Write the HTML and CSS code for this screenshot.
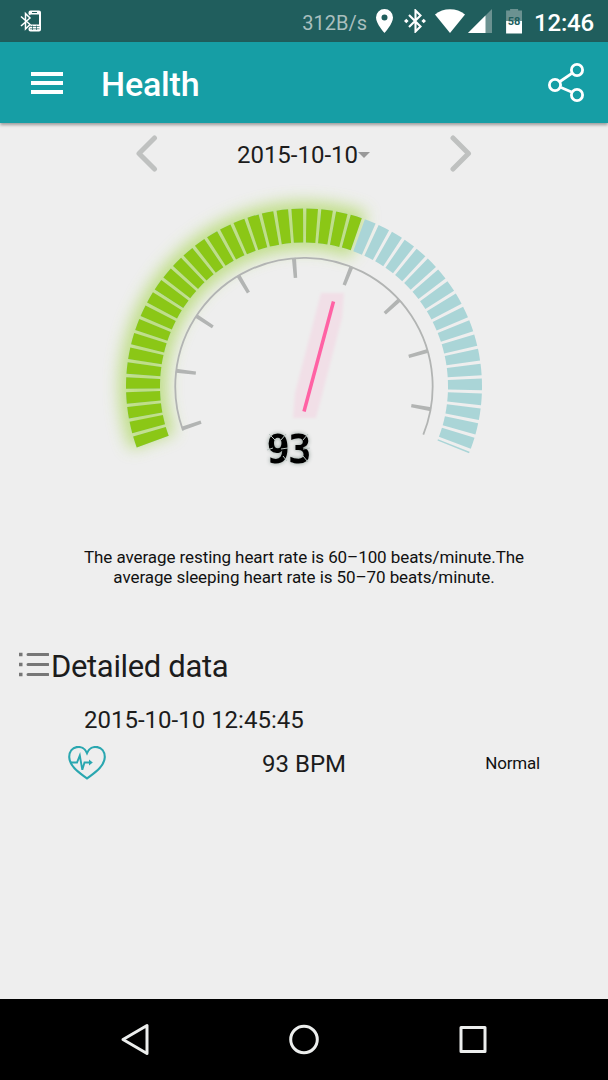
FILE: index.html
```html
<!DOCTYPE html>
<html lang="en">
<head>
<meta charset="utf-8">
<title>Health</title>
<link rel="stylesheet" href="styles.css">
</head>
<body>
<div class="status">
  <svg class="phone" width="22" height="22" viewBox="0 0 22 22">
    <path d="M1 6.500l9 8-4.500 4.500V3.500l4.500 4.500-9 8" fill="none" stroke="#fff" stroke-width="1.500"/>
    <path d="M8.500 4V2.500q0-2 2-2h8.500q2 0 2 2v17q0 2-2 2h-8.500q-2 0-2-2v-1l2-3v-1h8.500V4.500h-8.500l-.5 1z" fill="#fff"/>
    <path d="M12 2.500h5" stroke="#205e5d"/>
    <path d="M10 16.500h9.500M10 18.800h9.500M12.500 15.500v4.500M16.500 15.500v4.500" stroke="#205e5d" stroke-width=".7"/>
  </svg>
  <span class="speed">312B/s</span>
  <svg class="pin" width="17" height="24" viewBox="0 0 17 24">
    <path d="M8.500 0A8.500 8.500 0 0 0 0 8.500C0 14.800 8.500 24 8.500 24S17 14.800 17 8.500A8.500 8.500 0 0 0 8.500 0zm0 11.500a3 3 0 1 1 0-6 3 3 0 0 1 0 6z" fill="#fff"/>
  </svg>
  <svg class="bt" width="22" height="24" viewBox="0 0 22 24">
    <path d="M5 6l11.500 11.500-5 5V1.500l5 5L5 18" fill="none" stroke="#fff" stroke-width="2.100"/>
    <path d="M2.300 9.700l2.300 2.300-2.300 2.300L0 12zM19.700 9.700L22 12l-2.300 2.300-2.300-2.300z" fill="#fff"/>
  </svg>
  <svg class="wifi" width="30" height="24" viewBox="0 0 30 24">
    <path d="M15 24L0 5.500C8-1.600 22-1.600 30 5.500z" fill="#fff"/>
  </svg>
  <svg class="signal" width="24" height="24" viewBox="0 0 24 24">
    <path d="M0 24L24 0v24z" fill="#6b9291"/>
    <path d="M0 24L17.500 6.500V24z" fill="#fff"/>
  </svg>
  <span class="battery">58</span>
  <span class="clock">12:46</span>
</div>

<div class="appbar">
  <div class="menu"><i></i><i></i><i></i></div>
  <h1>Health</h1>
  <svg class="share" width="36" height="40" viewBox="0 0 36 40" fill="none" stroke="#fff">
    <path d="M12 18.500l11.500-7.800M13 24.500l10.500 4.500" stroke-width="2.800"/>
    <g stroke-width="2.800">
      <circle cx="7" cy="22" r="5.600"/>
      <circle cx="29" cy="7" r="5.600"/>
      <circle cx="29" cy="32" r="5.600"/>
    </g>
  </svg>
</div>

<div class="main">
  <div class="datebar">
    <svg width="22" height="37" viewBox="0 0 22 37"><path d="M18.500 3L3 18.500l15.500 15.500"/></svg>
    <span class="date">2015-10-10</span>
    <svg width="22" height="37" viewBox="0 0 22 37"><path d="M3 3l15.500 15.500L3 34"/></svg>
  </div>

  <!-- every arc starts at 160deg and sweeps 222deg, so dashes are given in degrees -->
  <svg class="gauge" width="608" height="296" viewBox="0 184 608 296">
    <defs>
      <filter id="glow" x="-20%" y="-20%" width="140%" height="140%"><feGaussianBlur stdDeviation="8"/></filter>
      <filter id="soft" filterUnits="userSpaceOnUse" x="270" y="270" width="100" height="170"><feGaussianBlur stdDeviation="1.800"/></filter>
    </defs>
    <path class="lit-glow" d="M152.710 441.570A161 161 0 0 1 359.060 235.200" filter="url(#glow)"/>
    <path class="bars" pathLength="222" d="M152.710 441.570A161 161 0 1 1 453.280 446.810"/>
    <path class="bars lit" pathLength="128.950" d="M152.710 441.570A161 161 0 0 1 356.290 234.230"/>
    <path class="dial" d="M183 430.500A128.700 128.700 0 1 1 423.300 434.700"/>
    <path class="ticks" pathLength="222" d="M192.180 427.200A119 119 0 1 1 414.330 431.080"/>
    <path class="needle-glow" d="M321 293h23l-2 25-26 100h-23l2-25z" filter="url(#soft)"/>
    <path class="needle" d="M333.500 301.500L304 411.500"/>
    <text class="value" x="266.500" y="463">93</text>
    <path class="cuts" d="M269 434l6 6M286 434l-5 6M267 450l6-2M281 449l7-1M283 456l4 5M303 440l5-6M303 449l7-1M303 456l5 6"/>
  </svg>

  <p class="note">The average resting heart rate is 60–100 beats/minute.The<br>average sleeping heart rate is 50–70 beats/minute.</p>

  <div class="heading">
    <svg width="30" height="26" viewBox="0 0 30 26">
      <path d="M9 2.500h20M9 12.500h20M9 22.500h20" stroke="#777" stroke-width="3" stroke-linecap="round"/>
      <path d="M0 2.500h3.500M0 12.500h3.500M0 22.500h3.500" stroke="#777" stroke-width="3.300"/>
    </svg>
    <h2>Detailed data</h2>
  </div>

  <div class="time">2015-10-10 12:45:45</div>
  <div class="record">
    <svg width="38" height="34" viewBox="0 0 38 34" fill="none" stroke="#2aa7b0">
      <path d="M19 32.500C14 28.500 1.200 21 1.200 11 1.200-.5 15-2.500 19 7 23-2.500 36.800-.5 36.800 11 36.800 21 24 28.500 19 32.500z" stroke-width="2.100"/>
      <path d="M3 16.500h6l2.800-7 2.500 14.300 2.200-7.300h6" stroke-width="1.900"/>
      <path d="M21 13.500l3.800 3-3.800 3z" fill="#2aa7b0" stroke="none"/>
    </svg>
    <span class="bpm">93 BPM</span>
    <span class="state">Normal</span>
  </div>
</div>

<div class="navbar">
  <svg width="30" height="34" viewBox="0 0 30 34"><path d="M27 2.500v28L3 16.500z"/></svg>
  <svg width="30" height="34" viewBox="0 0 30 34"><circle cx="15" cy="16.500" r="13.300"/></svg>
  <svg width="30" height="34" viewBox="0 0 30 34"><rect x="3" y="4.500" width="24" height="24"/></svg>
</div>
</body>
</html>
```
FILE: styles.css
```css
* {
  box-sizing: border-box;
}
body {
  margin: 0;
  height: 1080px;
  display: flex;
  flex-direction: column;
  overflow: hidden;
  background: #eee;
  color: #1c1c1c;
  font-family: Roboto, "Liberation Sans", sans-serif;
}
svg {
  display: block;
  flex: none;
}
h1, h2, p {
  margin: 0;
}

/* status bar */
.status {
  height: 42px;
  display: flex;
  align-items: center;
  padding: 0 14px 0 20px;
  background: #205e5d;
  color: #fff;
}
.speed {
  margin-left: auto;
  padding-top: 4px;
  color: #a9bfbe;
  font-size: 20px;
}
.pin {
  margin-left: 9px;
}
.bt {
  margin-left: 11px;
}
.wifi {
  margin-left: 9px;
}
.signal {
  margin-left: 3px;
}
.battery {
  width: 16px;
  height: 25px;
  margin-left: 14px;
  background: linear-gradient(#6b9291 12px, #fff 12px);
  clip-path: polygon(0 2px, 4px 2px, 4px 0, 12px 0, 12px 2px, 100% 2px, 100% 100%, 0 100%);
  color: #205e5d;
  font-size: 11px;
  font-weight: bold;
  line-height: 26px;
  text-align: center;
}
.clock {
  margin-left: 12px;
  padding-top: 3px;
  font-size: 24px;
  font-weight: 500;
  letter-spacing: -.2px;
}

/* title bar */
.appbar {
  height: 81px;
  flex: none;
  display: flex;
  align-items: center;
  padding: 0 24px 0 31px;
  background: #169ea5;
  box-shadow: 0 2px 3px rgba(0, 0, 0, .35);
  color: #fff;
}
.menu {
  width: 32px;
  height: 22px;
  display: flex;
  flex-direction: column;
  justify-content: space-between;
}
.menu i {
  height: 4px;
  background: #fff;
}
.appbar h1 {
  margin-left: 38px;
  padding-top: 2px;
  font-size: 34px;
  font-weight: 500;
  letter-spacing: -.2px;
}
.share {
  margin-left: auto;
}

.main {
  flex: 1;
}
.datebar {
  height: 61px;
  display: flex;
  align-items: center;
  justify-content: space-between;
  padding: 0 136px;
}
.datebar path {
  fill: none;
  stroke: #bfc1c0;
  stroke-width: 5;
  stroke-linecap: round;
  stroke-linejoin: round;
}
.date {
  display: flex;
  align-items: center;
  margin-left: -1px;
  padding-top: 2px;
  font-size: 24px;
}
.date::after {
  content: "";
  border: 6px solid transparent;
  border-top-color: #999;
  border-bottom: 0;
}

/* gauge */
.gauge path {
  fill: none;
}
.gauge .bars {
  stroke: #aad5d7;
  stroke-width: 34;
  stroke-dasharray: 3.75 1.065;
}
.gauge .lit {
  stroke: #8bc716;
}
.gauge .lit-glow {
  stroke: #a4d54a;
  stroke-width: 48;
  opacity: .62;
}
.gauge .dial {
  stroke: #b2b4b3;
  stroke-width: 1.8;
}
.gauge .ticks {
  stroke: #b2b4b3;
  stroke-width: 20;
  stroke-dasharray: 1.8 24.35;
}
.gauge .needle {
  stroke: #ff62a4;
  stroke-width: 3.5;
}
.gauge .needle-glow {
  fill: #f1dfe7;
}
.gauge .value {
  fill: #000;
  font: bold 39px "DejaVu Sans Mono", monospace;
  letter-spacing: -2px;
  filter: drop-shadow(0 0 2px #8a9a94);
}
.gauge .cuts {
  stroke: #b9c4c0;
  stroke-width: 1;
}

.note {
  padding-top: 67px;
  color: #111;
  font-size: 17px;
  letter-spacing: -.08px;
  line-height: 20px;
  text-align: center;
}

/* details */
.heading {
  display: flex;
  align-items: center;
  gap: 2px;
  margin-top: 58px;
  padding-left: 19px;
}
.heading h2 {
  padding-top: 4px;
  font-size: 31px;
  font-weight: normal;
  letter-spacing: -.35px;
  line-height: 36px;
}
.time {
  margin-top: 18px;
  padding-left: 84px;
  font-size: 24px;
  line-height: 34px;
}
.record {
  height: 52px;
  display: grid;
  grid-template-columns: 1fr auto 1fr;
  align-items: center;
  padding: 0 68px;
}
.bpm {
  padding-top: 1px;
  font-size: 24px;
}
.state {
  justify-self: end;
  color: #111;
  font-size: 17px;
  letter-spacing: -.2px;
}

/* navigation keys */
.navbar {
  height: 81px;
  flex: none;
  display: flex;
  align-items: center;
  justify-content: center;
  gap: 139px;
  background: #000;
}
.navbar svg {
  fill: none;
  stroke: #eceeed;
  stroke-width: 3;
  stroke-linejoin: round;
}
```
